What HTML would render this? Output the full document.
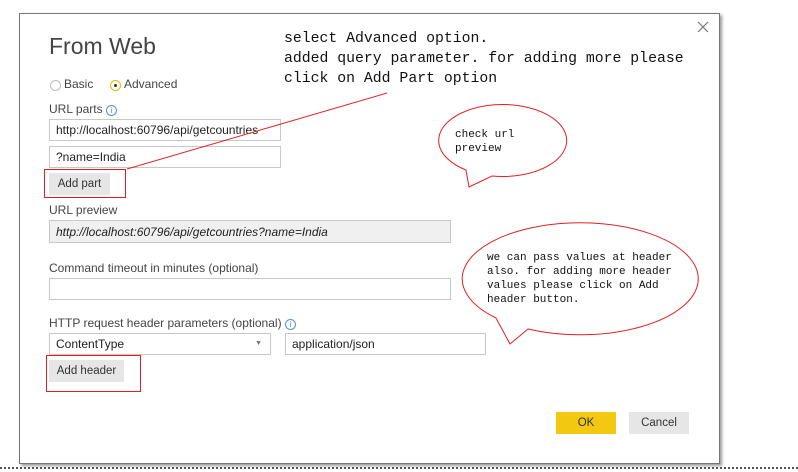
<!DOCTYPE html>
<html><head><meta charset="utf-8"><style>
body{margin:0;width:798px;height:472px;background:#fff;position:relative;overflow:hidden;font-family:"Segoe UI","Liberation Sans",sans-serif;color:#333}
.a{position:absolute}
.dlg{left:19px;top:13px;width:699px;height:449px;border:1px solid #777;box-shadow:2px 2px 3px #999;background:#fff}
.lbl{font-size:12px;color:#444}
.in{border:1px solid #c8c8c8;background:#fff;font-size:12px;line-height:20px;padding-left:6px;box-sizing:border-box;color:#222}
.btn{background:#e6e6e6;font-size:11.5px;text-align:center;color:#333}
.mono{font-family:"Liberation Mono","DejaVu Sans Mono",monospace;color:#111}
</style></head><body>
<div class="a dlg"></div>
<div class="a" style="left:0;top:467px;width:798px;border-top:2px dotted #555"></div>
<svg class="a" style="left:697px;top:21px" width="12" height="12"><path d="M1,1 L11,11 M11,1 L1,11" stroke="#777" stroke-width="1.2"/></svg>
<div class="a" style="left:49px;top:33px;font-size:23px;color:#444;font-weight:300">From Web</div>
<div class="a" style="left:50px;top:80px;width:9px;height:9px;border:1px solid #bbb;border-radius:50%"></div>
<div class="a lbl" style="left:64px;top:77px">Basic</div>
<div class="a" style="left:110px;top:80px;width:9px;height:9px;border:1px solid #e8b800;border-radius:50%"></div>
<div class="a" style="left:114px;top:84px;width:3px;height:3px;background:#333;border-radius:50%"></div>
<div class="a lbl" style="left:124px;top:77px">Advanced</div>
<div class="a lbl" style="left:49px;top:102px">URL parts <span style="display:inline-block;width:9px;height:9px;border:1px solid #5a8fd6;border-radius:50%;font-size:8px;line-height:9px;text-align:center;color:#5a8fd6">i</span></div>
<div class="a in" style="left:49px;top:119px;width:232px;height:22px">http://localhost:60796/api/getcountries</div>
<div class="a in" style="left:49px;top:146px;width:232px;height:22px">?name=India</div>
<div class="a btn" style="left:49px;top:173px;width:61px;height:22px;line-height:22px">Add part</div>
<div class="a" style="left:44px;top:169px;width:80px;height:27px;border:1px solid #e02020"></div>
<div class="a lbl" style="left:49px;top:203px">URL preview</div>
<div class="a in" style="left:49px;top:220px;width:402px;height:23px;background:#f0f0f0;font-style:italic;line-height:22px">http://localhost:60796/api/getcountries?name=India</div>
<div class="a lbl" style="left:49px;top:261px">Command timeout in minutes (optional)</div>
<div class="a in" style="left:49px;top:278px;width:402px;height:22px"></div>
<div class="a lbl" style="left:49px;top:316px">HTTP request header parameters (optional) <span style="display:inline-block;width:9px;height:9px;border:1px solid #5a8fd6;border-radius:50%;font-size:8px;line-height:9px;text-align:center;color:#5a8fd6">i</span></div>
<div class="a in" style="left:49px;top:333px;width:222px;height:22px">ContentType<span style="position:absolute;right:8px;font-size:7px;color:#777">▼</span></div>
<div class="a in" style="left:285px;top:333px;width:201px;height:22px">application/json</div>
<div class="a btn" style="left:49px;top:360px;width:75px;height:22px;line-height:22px">Add header</div>
<div class="a" style="left:46px;top:355px;width:93px;height:35px;border:1px solid #e02020"></div>
<div class="a btn" style="left:556px;top:412px;width:60px;height:22px;line-height:22px;background:#f2c811">OK</div>
<div class="a btn" style="left:629px;top:412px;width:60px;height:22px;line-height:22px">Cancel</div>
<div class="a mono" style="left:284px;top:29px;font-size:14.8px;line-height:20px;white-space:pre">select Advanced option.
added query parameter. for adding more please
click on Add Part option</div>
<svg class="a" style="left:0;top:0" width="798" height="472">
<line x1="387" y1="93" x2="127" y2="169" stroke="#e02020" stroke-width="1"/>
<path d="M466,170 A64,36 0 1 1 492,176 L469,187 Z" fill="#fff" stroke="#e02020"/>
<path d="M496,318 A118,56 0 1 1 528,329 L510,344 Z" fill="#fff" stroke="#e02020"/>
</svg>
<div class="a mono" style="left:455px;top:128px;font-size:11px;line-height:14px;white-space:pre">check url
preview</div>
<div class="a mono" style="left:487px;top:251px;font-size:11px;line-height:14px;white-space:pre">we can pass values at header
also. for adding more header
values please click on Add
header button.</div>
</body></html>
